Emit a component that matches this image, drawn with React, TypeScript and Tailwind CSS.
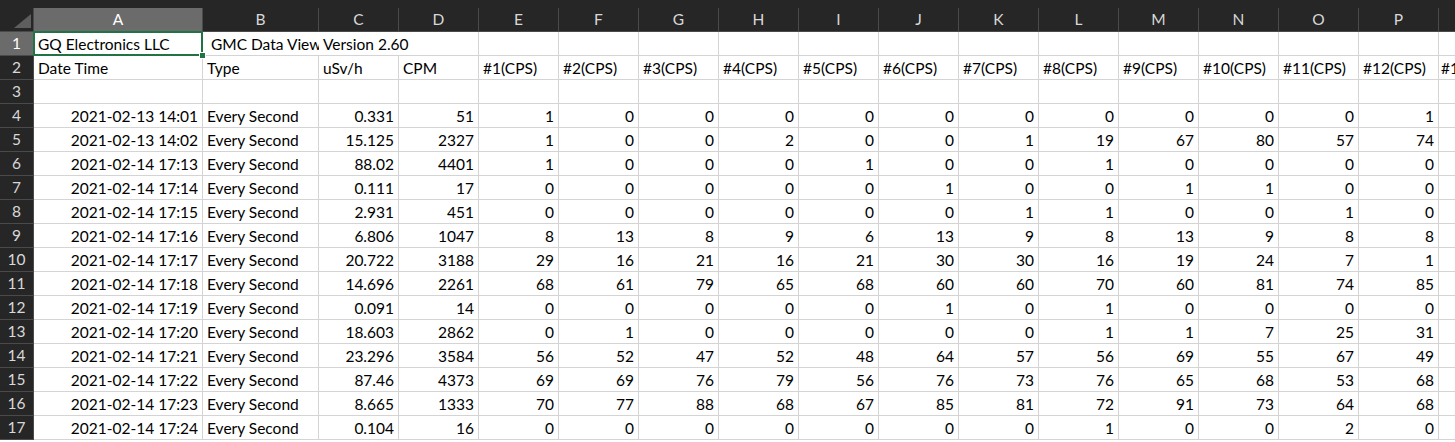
import React from "react";

const letters = ["A", "B", "C", "D", "E", "F", "G", "H", "I", "J", "K", "L", "M", "N", "O", "P"];

const rows: [string, string, string, number[]][] = [
  ["2021-02-13 14:01", "0.331", "51", [1, 0, 0, 0, 0, 0, 0, 0, 0, 0, 0, 1]],
  ["2021-02-13 14:02", "15.125", "2327", [1, 0, 0, 2, 0, 0, 1, 19, 67, 80, 57, 74]],
  ["2021-02-14 17:13", "88.02", "4401", [1, 0, 0, 0, 1, 0, 0, 1, 0, 0, 0, 0]],
  ["2021-02-14 17:14", "0.111", "17", [0, 0, 0, 0, 0, 1, 0, 0, 1, 1, 0, 0]],
  ["2021-02-14 17:15", "2.931", "451", [0, 0, 0, 0, 0, 0, 1, 1, 0, 0, 1, 0]],
  ["2021-02-14 17:16", "6.806", "1047", [8, 13, 8, 9, 6, 13, 9, 8, 13, 9, 8, 8]],
  ["2021-02-14 17:17", "20.722", "3188", [29, 16, 21, 16, 21, 30, 30, 16, 19, 24, 7, 1]],
  ["2021-02-14 17:18", "14.696", "2261", [68, 61, 79, 65, 68, 60, 60, 70, 60, 81, 74, 85]],
  ["2021-02-14 17:19", "0.091", "14", [0, 0, 0, 0, 0, 1, 0, 1, 0, 0, 0, 0]],
  ["2021-02-14 17:20", "18.603", "2862", [0, 1, 0, 0, 0, 0, 0, 1, 1, 7, 25, 31]],
  ["2021-02-14 17:21", "23.296", "3584", [56, 52, 47, 52, 48, 64, 57, 56, 69, 55, 67, 49]],
  ["2021-02-14 17:22", "87.46", "4373", [69, 69, 76, 79, 56, 76, 73, 76, 65, 68, 53, 68]],
  ["2021-02-14 17:23", "8.665", "1333", [70, 77, 88, 68, 67, 85, 81, 72, 91, 73, 64, 68]],
  ["2021-02-14 17:24", "0.104", "16", [0, 0, 0, 0, 0, 0, 0, 1, 0, 0, 2, 0]],
];

const grid = "grid grid-cols-[34px_169px_116px_repeat(14,80px)_1fr]";
const cell = "h-[24px] border-r border-b border-[#d4d4d4] flex items-end pb-[1px] px-[4px] leading-[19px] whitespace-nowrap overflow-hidden";
const rowHead = "h-[24px] border-r border-b border-[#4a4a4a] bg-[#262626] text-[#d8d8d8] flex items-center justify-center";

const RowNum = ({ n, active }: { n: number; active?: boolean }) => (
  <div className={active ? "h-[24px] border-r border-b border-[#4a4a4a] bg-[#6b6b6b] text-white flex items-center justify-center" : rowHead}>
    {n}
  </div>
);

export default function App() {
  return (
    <div className="w-[1455px] h-[442px] overflow-hidden bg-white text-[15.5px] text-black font-['Lato','Liberation_Sans',sans-serif]">
      <div className="h-2 bg-[#262626]" />
      {/* column header */}
      <div className={`${grid} bg-[#262626] text-[#d8d8d8]`}>
        <div className="h-[24px] border-r border-b border-[#4a4a4a] flex items-end justify-end pr-[2px] pb-[3px]">
          <svg width="17" height="14" viewBox="0 0 17 14">
            <polygon points="17,0 17,14 0,14" fill="#5e5e5e" />
          </svg>
        </div>
        {letters.map((l) => (
          <div
            key={l}
            className={
              l === "A"
                ? "h-[24px] border-r border-b border-[#4a4a4a] bg-[#6b6b6b] text-white flex items-center justify-center"
                : "h-[24px] border-r border-b border-[#4a4a4a] flex items-center justify-center"
            }
          >
            {l}
          </div>
        ))}
        <div className="h-[24px] border-b border-[#4a4a4a]" />
      </div>

      {/* row 1 */}
      <div className={grid}>
        <RowNum n={1} active />
        <div className={`${cell} relative overflow-visible`}>
          GQ Electronics LLC
          <div className="absolute -left-[1px] -top-[1px] -right-[1px] -bottom-[1px] border-2 border-[#217346]" />
          <div className="absolute -right-[4px] -bottom-[4px] w-[7px] h-[7px] bg-[#217346] border border-white z-10" />
        </div>
        <div className="h-[24px] border-b border-[#d4d4d4] flex items-end pb-[1px] pl-[8px] leading-[19px] whitespace-nowrap overflow-hidden">
          GMC Data Viewer
        </div>
        <div className="col-span-2 h-[24px] border-r border-b border-[#d4d4d4] flex items-end pb-[1px] px-[4px] leading-[19px] whitespace-nowrap">
          Version 2.60
        </div>
        {letters.slice(4).map((l) => (
          <div key={l} className={cell} />
        ))}
        <div className="h-[24px] border-b border-[#d4d4d4]" />
      </div>

      {/* row 2 */}
      <div className={grid}>
        <RowNum n={2} />
        <div className={cell}>Date Time</div>
        <div className={cell}>Type</div>
        <div className={cell}>uSv/h</div>
        <div className={cell}>CPM</div>
        {Array.from({ length: 12 }, (_, i) => (
          <div key={i} className={cell}>#{i + 1}(CPS)</div>
        ))}
        <div className="h-[24px] border-b border-[#d4d4d4] flex items-end pb-[1px] px-[2px] leading-[19px] whitespace-nowrap overflow-hidden">
          #13(CPS)
        </div>
      </div>

      {/* row 3 */}
      <div className={grid}>
        <RowNum n={3} />
        {letters.map((l) => (
          <div key={l} className={cell} />
        ))}
        <div className="h-[24px] border-b border-[#d4d4d4]" />
      </div>

      {rows.map(([dt, usv, cpm, cps], r) => (
        <div key={dt} className={grid}>
          <RowNum n={r + 4} />
          <div className={`${cell} justify-end`}>{dt}</div>
          <div className={cell}>Every Second</div>
          <div className={`${cell} justify-end`}>{usv}</div>
          <div className={`${cell} justify-end`}>{cpm}</div>
          {cps.map((v, i) => (
            <div key={i} className={`${cell} justify-end`}>{v}</div>
          ))}
          <div className="h-[24px] border-b border-[#d4d4d4]" />
        </div>
      ))}
    </div>
  );
}
